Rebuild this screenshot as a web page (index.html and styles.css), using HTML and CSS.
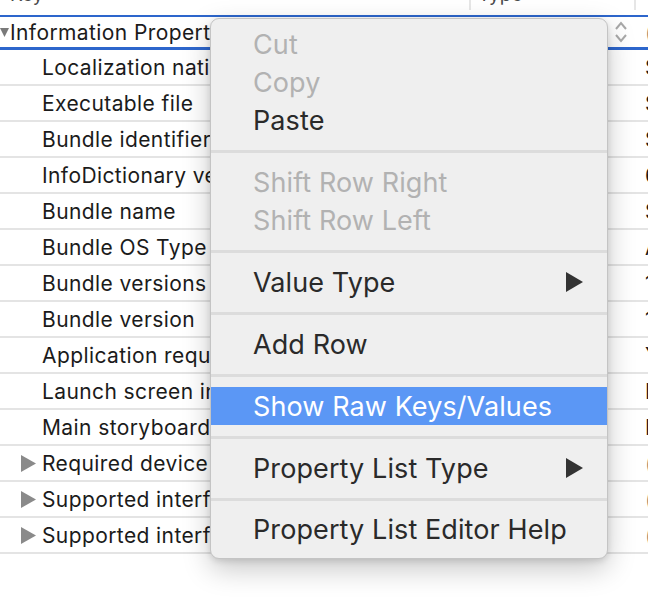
FILE: index.html
```html
<!DOCTYPE html>
<html>
<head>
<meta charset="utf-8">
<link rel="stylesheet" href="styles.css">
</head>
<body>
<div class="outline">
  <div class="hdr">
    <div class="hcell hk"><span class="htext">Key</span></div>
    <div class="hcell ht"><span class="htext">Type</span></div>
    <div class="hcell hv"></div>
  </div>
  <div class="row sel">
    <div class="key lvl0"><svg class="disc-open" width="9" height="10" viewBox="0 0 9 10"><polygon points="0,1 9,1 4.5,10" fill="#7a7a7a"/></svg><span>Information Property List</span></div>
    <div class="type"><svg class="stepper" width="14" height="24" viewBox="0 0 14 24"><polyline points="2,9 7,3 12,9" fill="none" stroke="#a9a9a9" stroke-width="2"/><polyline points="2,15 7,21 12,15" fill="none" stroke="#a9a9a9" stroke-width="2"/></svg></div>
    <div class="val muted">(15 items)</div>
  </div>
  <div class="row"><div class="key lvl1"><span>Localization native development region</span></div><div class="type"></div><div class="val">$(DEVELOPMENT_LANGUAGE)</div></div>
  <div class="row"><div class="key lvl1"><span>Executable file</span></div><div class="type"></div><div class="val">$(EXECUTABLE_NAME)</div></div>
  <div class="row"><div class="key lvl1"><span>Bundle identifier</span></div><div class="type"></div><div class="val">$(PRODUCT_BUNDLE_IDENTIFIER)</div></div>
  <div class="row"><div class="key lvl1"><span>InfoDictionary version</span></div><div class="type"></div><div class="val">6.0</div></div>
  <div class="row"><div class="key lvl1"><span>Bundle name</span></div><div class="type"></div><div class="val">$(PRODUCT_NAME)</div></div>
  <div class="row"><div class="key lvl1"><span>Bundle OS Type code</span></div><div class="type"></div><div class="val">APPL</div></div>
  <div class="row"><div class="key lvl1"><span>Bundle versions string, short</span></div><div class="type"></div><div class="val">1.0</div></div>
  <div class="row"><div class="key lvl1"><span>Bundle version</span></div><div class="type"></div><div class="val">1</div></div>
  <div class="row"><div class="key lvl1"><span>Application requires iPhone environment</span></div><div class="type"></div><div class="val">YES</div></div>
  <div class="row"><div class="key lvl1"><span>Launch screen interface file base name</span></div><div class="type"></div><div class="val">LaunchScreen</div></div>
  <div class="row"><div class="key lvl1"><span>Main storyboard file base name</span></div><div class="type"></div><div class="val">Main</div></div>
  <div class="row"><div class="key lvl1 has-disc"><svg class="disc" width="15" height="17" viewBox="0 0 15 17"><polygon points="0,0 15,8.5 0,17" fill="#8a8a8a"/></svg><span>Required device capabilities</span></div><div class="type"></div><div class="val muted">(1 item)</div></div>
  <div class="row"><div class="key lvl1 has-disc"><svg class="disc" width="15" height="17" viewBox="0 0 15 17"><polygon points="0,0 15,8.5 0,17" fill="#8a8a8a"/></svg><span>Supported interface orientations</span></div><div class="type"></div><div class="val muted">(3 items)</div></div>
  <div class="row"><div class="key lvl1 has-disc"><svg class="disc" width="15" height="17" viewBox="0 0 15 17"><polygon points="0,0 15,8.5 0,17" fill="#8a8a8a"/></svg><span>Supported interface orientations (iPad)</span></div><div class="type"></div><div class="val muted">(4 items)</div></div>
</div>

<div class="menu">
  <div class="item disabled">Cut</div>
  <div class="item disabled">Copy</div>
  <div class="item">Paste</div>
  <div class="sepline"></div>
  <div class="item disabled">Shift Row Right</div>
  <div class="item disabled">Shift Row Left</div>
  <div class="sepline"></div>
  <div class="item sub">Value Type<svg class="arrow" width="17" height="20" viewBox="0 0 17 20"><polygon points="0,0 17,10 0,20" fill="#333"/></svg></div>
  <div class="sepline"></div>
  <div class="item">Add Row</div>
  <div class="sepline"></div>
  <div class="item hl">Show Raw Keys/Values</div>
  <div class="sepline"></div>
  <div class="item sub">Property List Type<svg class="arrow" width="17" height="20" viewBox="0 0 17 20"><polygon points="0,0 17,10 0,20" fill="#333"/></svg></div>
  <div class="sepline"></div>
  <div class="item">Property List Editor Help</div>
</div>
</body>
</html>
```

FILE: styles.css
```css
html, body {
  margin: 0;
  padding: 0;
  background: #ffffff;
}
body {
  width: 648px;
  height: 606px;
  overflow: hidden;
  position: relative;
  font-family: "Inter", "Liberation Sans", sans-serif;
}
.outline {
  display: flex;
  flex-direction: column;
}
.hdr {
  display: grid;
  grid-template-columns: 471px 165px 1fr;
  height: 15px;
  overflow: hidden;
}
.hcell {
  border-right: 2px solid #e6e6e6;
  height: 10px;
  overflow: hidden;
  position: relative;
}
.hv { border-right: none; }
.htext {
  display: block;
  font-size: 19px;
  line-height: 19px;
  color: #4a4a4a;
  margin-top: -15px;
}
.hk .htext { padding-left: 10px; }
.ht .htext { padding-left: 7px; }

.row {
  display: grid;
  grid-template-columns: 471px 165px 1fr;
  height: 34px;
  border-bottom: 2px solid #e4e4e4;
  font-size: 21px;
  letter-spacing: 0.4px;
  color: #1b1b1b;
  white-space: nowrap;
}
.row.sel {
  height: 30px;
  border-top: 2px solid #2d66cc;
  border-bottom: 3px solid #2d66cc;
}
.key {
  display: flex;
  align-items: center;
  overflow: hidden;
}
.lvl0 { padding-left: 0; }
.lvl0 span { margin-left: 1px; }
.lvl1 { padding-left: 42px; }
.lvl1.has-disc { padding-left: 21px; }
.disc { margin-right: 6px; flex: none; }
.disc-open { flex: none; }
.type {
  display: flex;
  align-items: center;
  justify-content: flex-end;
  padding-right: 8px;
}
.stepper { display: block; }
.val {
  display: flex;
  align-items: center;
  padding-left: 9px;
  overflow: hidden;
}
.muted { color: #8c7e70; }

.menu {
  position: absolute;
  left: 210px;
  top: 18px;
  width: 398px;
  height: 541px;
  box-sizing: border-box;
  padding: 7px 0 9px;
  background: #efefef;
  border: 1px solid #c4c4c4;
  border-radius: 9px;
  box-shadow: 0 10px 28px rgba(0, 0, 0, 0.22), 0 2px 6px rgba(0, 0, 0, 0.12);
  display: flex;
  flex-direction: column;
  font-size: 27px;
  letter-spacing: 0.1px;
  color: #2a2a2a;
}
.item {
  height: 38px;
  display: flex;
  align-items: center;
  padding-left: 42px;
  padding-right: 24px;
  white-space: nowrap;
}
.item.disabled { color: #b2b2b2; }
.item.hl {
  background: #5b97f5;
  color: #ffffff;
}
.item.sub { justify-content: space-between; }
.arrow { display: block; }
.sepline {
  height: 24px;
  display: flex;
  align-items: center;
}
.sepline::before {
  content: "";
  display: block;
  width: 100%;
  height: 3px;
  background: #dcdcdc;
}
```
